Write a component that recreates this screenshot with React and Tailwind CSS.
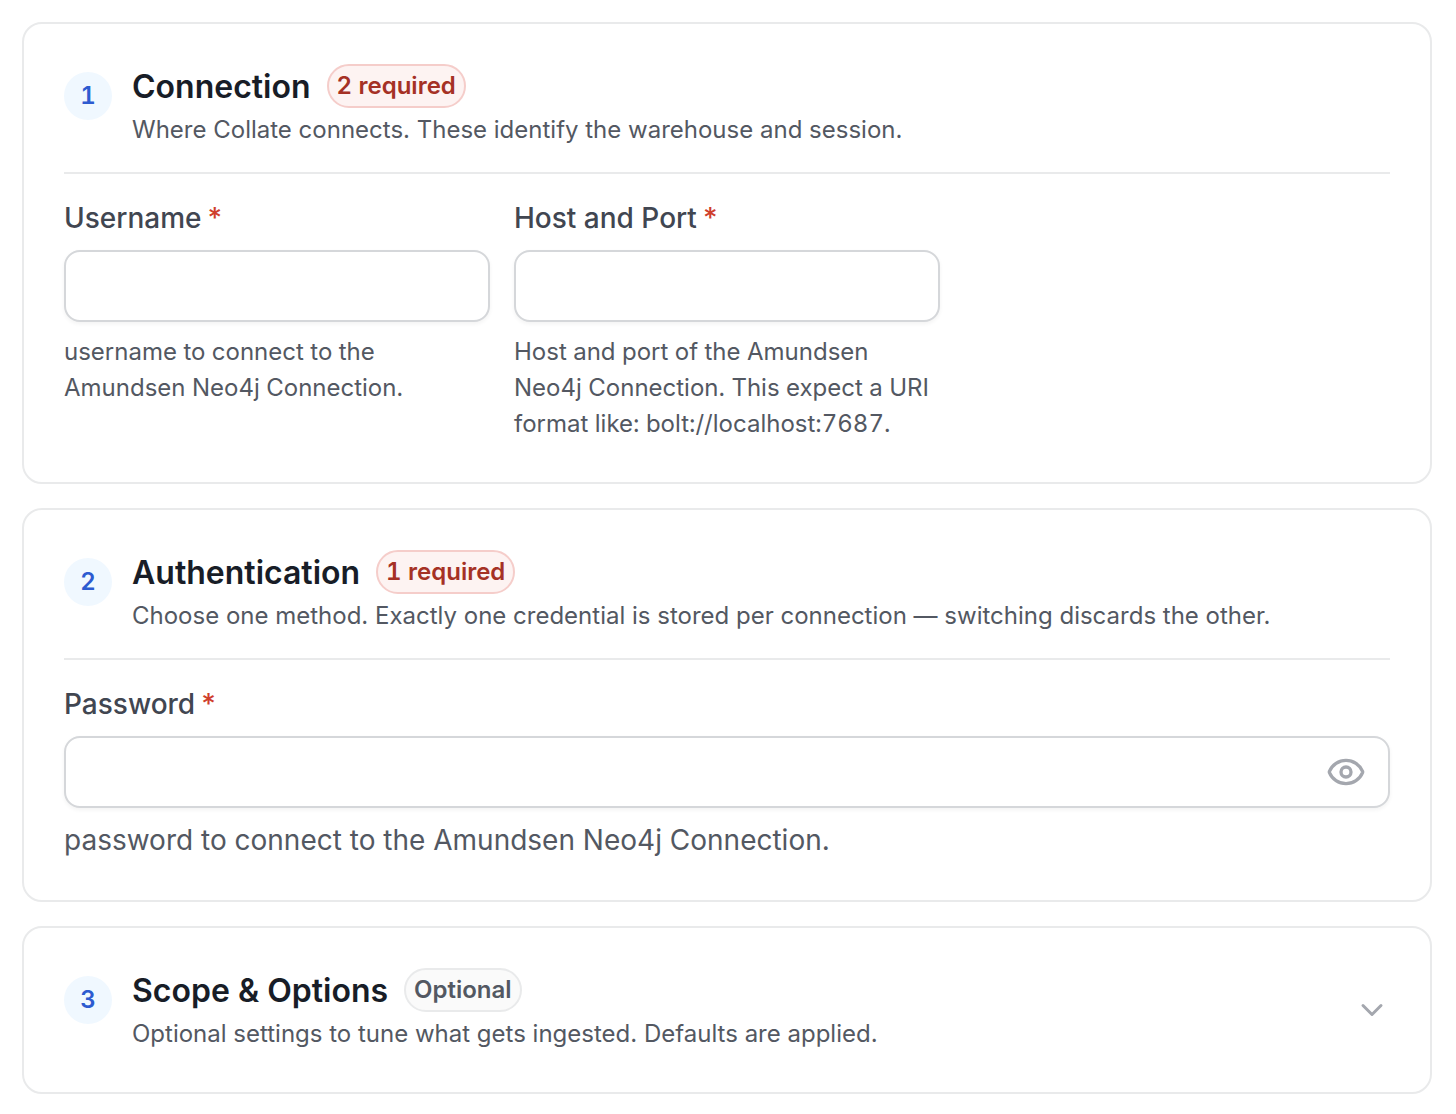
import React, { useState } from "react";
import { Eye, ChevronDown } from "lucide-react";

function Badge({ tone, children }) {
  const tones = {
    error: "border-[#f5cdca] bg-[#fdf3f2] text-[#a53125]",
    gray: "border-[#e9eaeb] bg-[#fafafa] text-[#535862]",
  };
  return (
    <span className={`flex h-11 items-center rounded-full border-2 px-2 text-[24px] leading-9 font-semibold tabular-nums ${tones[tone]}`}>
      {children}
    </span>
  );
}

function SectionHeader({ step, title, badge, tone, description, children }) {
  return (
    <header className="flex items-start gap-5">
      <span className="mt-2 flex size-12 shrink-0 items-center justify-center rounded-full bg-[#f0f8ff] text-[24px] leading-9 font-semibold text-[#2d5bd0] tabular-nums">
        {step}
      </span>
      <div className="min-w-0 flex-1">
        <div className="flex items-start gap-4">
          <h2 className="text-[32px] leading-[46px] font-semibold text-[#181d27]">{title}</h2>
          <Badge tone={tone}>{badge}</Badge>
        </div>
        <p className="mt-0.5 text-[24px] leading-9 text-[#535862]">{description}</p>
      </div>
      {children}
    </header>
  );
}

function Card({ children }) {
  return <section className="rounded-[20px] border-2 border-[#e9eaeb] bg-white p-10">{children}</section>;
}

function Label({ htmlFor, children }) {
  return (
    <label htmlFor={htmlFor} className="flex gap-1.5 text-[28px] leading-10 font-medium text-[#414651]">
      {children}
      <span className="text-[#cf3e2c]">*</span>
    </label>
  );
}

const inputClass =
  "h-18 w-full rounded-2xl border-2 border-[#d5d7da] bg-white px-6 text-[28px] text-[#181d27] shadow-[0_2px_4px_rgba(10,13,18,0.05)] outline-none focus:border-[#2d5bd0]";

function TextField({ id, label, hint }) {
  return (
    <div>
      <Label htmlFor={id}>{label}</Label>
      <input id={id} type="text" aria-describedby={`${id}-hint`} className={`mt-3 ${inputClass}`} />
      <p id={`${id}-hint`} className="mt-3 text-[24px] leading-9 text-[#535862] tabular-nums">{hint}</p>
    </div>
  );
}

export default function App() {
  const [visible, setVisible] = useState(false);
  return (
    <main className="flex flex-col gap-6 bg-white pt-[22px] pr-6 pb-5 pl-[22px] font-['Inter',sans-serif]">
      <Card>
        <SectionHeader
          step="1"
          title="Connection"
          badge="2 required"
          tone="error"
          description="Where Collate connects. These identify the warehouse and session."
        />
        <div className="mt-6 grid grid-cols-3 gap-6 border-t-2 border-[#e9eaeb] pt-6">
          <TextField id="username" label="Username" hint="username to connect to the Amundsen Neo4j Connection." />
          <TextField
            id="host-port"
            label="Host and Port"
            hint="Host and port of the Amundsen Neo4j Connection. This expect a URI format like: bolt://localhost:7687."
          />
        </div>
      </Card>

      <Card>
        <SectionHeader
          step="2"
          title="Authentication"
          badge="1 required"
          tone="error"
          description="Choose one method. Exactly one credential is stored per connection — switching discards the other."
        />
        <div className="mt-6 border-t-2 border-[#e9eaeb] pt-6">
          <Label htmlFor="password">Password</Label>
          <div className="relative mt-3">
            <input
              id="password"
              type={visible ? "text" : "password"}
              aria-describedby="password-hint"
              className={`pr-20 ${inputClass}`}
            />
            <button
              type="button"
              aria-label={visible ? "Hide password" : "Show password"}
              onClick={() => setVisible(!visible)}
              className="absolute inset-y-0 right-6 flex items-center text-[#a4a7ae]"
            >
              <Eye size={40} strokeWidth={2} />
            </button>
          </div>
          <p id="password-hint" className="mt-3 text-[28px] leading-10 text-[#535862]">
            password to connect to the Amundsen Neo4j Connection.
          </p>
        </div>
      </Card>

      <Card>
        <SectionHeader
          step="3"
          title="Scope & Options"
          badge="Optional"
          tone="gray"
          description="Optional settings to tune what gets ingested. Defaults are applied."
        >
          <button type="button" aria-label="Expand Scope & Options" className="self-center text-[#a4a7ae]">
            <ChevronDown size={36} strokeWidth={2} />
          </button>
        </SectionHeader>
      </Card>
    </main>
  );
}
